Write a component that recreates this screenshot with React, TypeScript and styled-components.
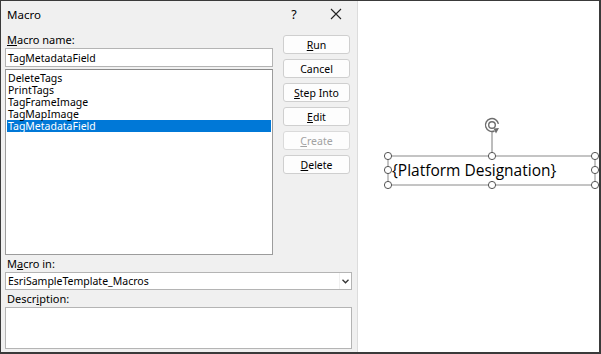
import React from "react";
import styled, { createGlobalStyle } from "styled-components";

const Global = createGlobalStyle`
  html, body { margin: 0; padding: 0; background: #fff; }
  * { box-sizing: border-box; }
`;

const Frame = styled.div`
  width: 601px;
  height: 354px;
  display: flex;
  border-top: 1px solid #3a3a3a;
  border-left: 1px solid #3a3a3a;
  border-bottom: 2px solid #3a3a3a;
  border-right: 2px solid #3a3a3a;
  font-family: "Noto Sans", "Open Sans", sans-serif;
  font-size: 10.5px;
  color: #000;
  overflow: hidden;
`;

const Dialog = styled.div`
  width: 357px;
  flex: none;
  background: #f0f0f0;
  border-right: 1px solid #dcdcdc;
  display: flex;
  flex-direction: column;
  padding: 0 5px 0 4px;
`;

const TitleBar = styled.div`
  height: 30px;
  display: flex;
  align-items: center;
  padding: 0 0 4px 2px;
  margin-right: -5px;
`;

const Title = styled.div`
  flex: 1;
  font-size: 11.5px;
`;

const TitleIcon = styled.div`
  width: 42px;
  display: flex;
  justify-content: center;
  align-items: center;
  font-size: 12.5px;
`;

const TopRow = styled.div`
  display: flex;
  gap: 10px;
`;

const LeftCol = styled.div`
  width: 268px;
  display: flex;
  flex-direction: column;
`;

const Label = styled.div`
  height: 17px;
  line-height: 17px;
  padding-left: 2px;
  font-size: 11px;
  white-space: nowrap;
`;

const Field = styled.div`
  height: 19px;
  background: #fff;
  border: 1px solid #b4b4b4;
  display: flex;
  align-items: center;
  padding: 0 2px;
`;

const List = styled.div`
  margin-top: 2px;
  height: 186px;
  background: #fff;
  border: 1px solid #9c9c9c;
  border-top-color: #8a8a8a;
  padding: 2px 1px;
`;

const Item = styled.div<{ $selected?: boolean }>`
  height: 12px;
  line-height: 12px;
  padding-left: 1px;
  background: ${(p) => (p.$selected ? "#0078d7" : "transparent")};
  color: ${(p) => (p.$selected ? "#fff" : "#000")};
`;

const ButtonCol = styled.div`
  width: 67px;
  padding-top: 4px;
  display: flex;
  flex-direction: column;
  gap: 5px;
`;

const Button = styled.div<{ $disabled?: boolean }>`
  height: 19px;
  border: 1px solid ${(p) => (p.$disabled ? "#dadada" : "#cfcfcf")};
  border-radius: 3px;
  background: #fdfdfd;
  display: flex;
  align-items: center;
  justify-content: center;
  color: ${(p) => (p.$disabled ? "#a2a2a2" : "#000")};
`;

const Select = styled.div`
  height: 18px;
  background: #fff;
  border: 1px solid #b4b4b4;
  display: flex;
  align-items: center;
  padding-left: 2px;
`;

const SelectText = styled.div`
  flex: 1;
`;

const Arrow = styled.div`
  width: 12px;
  height: 100%;
  display: flex;
  align-items: center;
  justify-content: center;
  border-left: 1px solid #f0f0f0;
`;

const TextArea = styled.div`
  height: 42px;
  background: #fff;
  border: 1px solid #b4b4b4;
`;

const Page = styled.div`
  flex: 1;
  background: #fff;
  position: relative;
`;

const ShapeBox = styled.div`
  position: absolute;
  left: 25px;
  top: 113px;
  width: 220px;
  height: 80px;
`;

const ShapeText = styled.div`
  position: absolute;
  left: 9px;
  top: 45px;
  font-family: "Open Sans", sans-serif;
  font-size: 15.5px;
  line-height: 22px;
  white-space: nowrap;
  color: #000;
`;

const U = styled.span`
  text-decoration: underline;
  text-underline-offset: 1px;
`;

const handles: [number, number][] = [
  [5, 42], [109, 42], [212, 42],
  [5, 56], [212, 56],
  [5, 71], [109, 71], [212, 71],
];

export default function App() {
  return (
    <>
      <Global />
      <Frame>
        <Dialog>
          <TitleBar>
            <Title>Macro</Title>
            <TitleIcon>?</TitleIcon>
            <TitleIcon>
              <svg width="12" height="12" viewBox="0 0 12 12">
                <path d="M1 1 L11 11 M11 1 L1 11" stroke="#222" strokeWidth="1.1" />
              </svg>
            </TitleIcon>
          </TitleBar>
          <TopRow>
            <LeftCol>
              <Label><U>M</U>acro name:</Label>
              <Field>TagMetadataField</Field>
              <List>
                <Item>DeleteTags</Item>
                <Item>PrintTags</Item>
                <Item>TagFrameImage</Item>
                <Item>TagMapImage</Item>
                <Item $selected>TagMetadataField</Item>
              </List>
            </LeftCol>
            <ButtonCol>
              <Button><span><U>R</U>un</span></Button>
              <Button>Cancel</Button>
              <Button><span><U>S</U>tep Into</span></Button>
              <Button><span><U>E</U>dit</span></Button>
              <Button $disabled><span><U>C</U>reate</span></Button>
              <Button><span><U>D</U>elete</span></Button>
            </ButtonCol>
          </TopRow>
          <Label>M<U>a</U>cro in:</Label>
          <Select>
            <SelectText>EsriSampleTemplate_Macros</SelectText>
            <Arrow>
              <svg width="7" height="5" viewBox="0 0 7 5">
                <path d="M0.5 0.8 L3.5 3.8 L6.5 0.8" stroke="#333" strokeWidth="1.3" fill="none" />
              </svg>
            </Arrow>
          </Select>
          <Label>Descr<U>i</U>ption:</Label>
          <TextArea />
        </Dialog>
        <Page>
          <ShapeBox>
            <svg width="220" height="80" viewBox="0 0 220 80">
              <rect x="5" y="42" width="207" height="29" fill="none" stroke="#8a8a8a" strokeWidth="1" />
              <line x1="109" y1="18" x2="109" y2="42" stroke="#7a7a7a" strokeWidth="1" />
              <g fill="none" stroke="#6e6e6e" strokeWidth="1.4">
                <path d="M115.4 9.9 A6.5 6.5 0 1 0 111.5 17" />
                <circle cx="109" cy="11" r="3.3" />
              </g>
              <path d="M110.5 14.5 L116 14 L113 19.5 Z" fill="#6e6e6e" />
              {handles.map(([x, y], i) => (
                <circle key={i} cx={x} cy={y} r="3.6" fill="#fff" stroke="#555" strokeWidth="1" />
              ))}
            </svg>
            <ShapeText>{"{Platform Designation}"}</ShapeText>
          </ShapeBox>
        </Page>
      </Frame>
    </>
  );
}
